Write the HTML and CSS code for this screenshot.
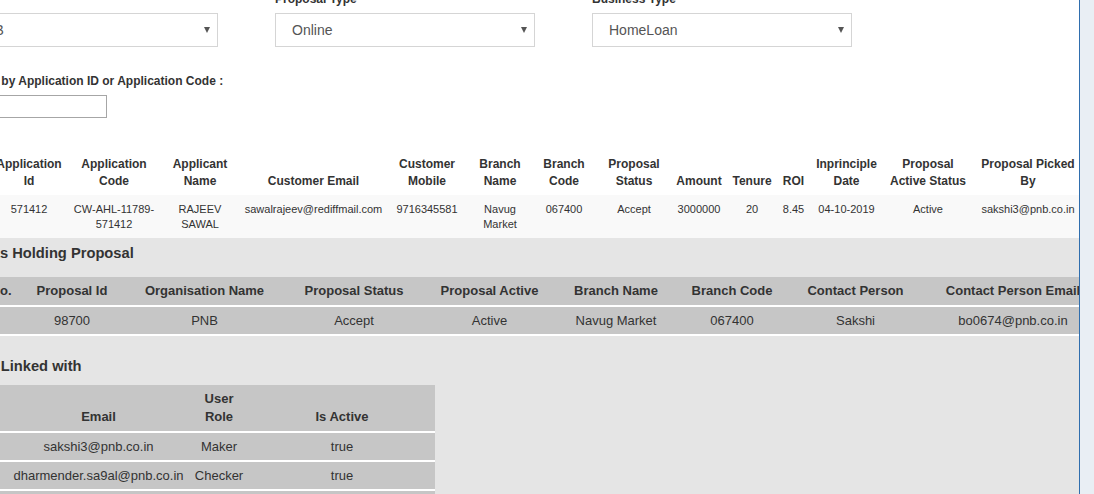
FILE: index.html
```html
<!DOCTYPE html>
<html lang="en">
<head>
<meta charset="utf-8">
<title>Proposal Details</title>
<link rel="stylesheet" href="styles.css">
</head>
<body>
<div class="viewport">
  <div class="page">
    <div class="filters">
      <div class="field">
        <div class="field-label">Bank</div>
        <div class="select"><span>PNB</span><span class="caret"></span></div>
      </div>
      <div class="field">
        <div class="field-label">Proposal Type</div>
        <div class="select"><span>Online</span><span class="caret"></span></div>
      </div>
      <div class="field">
        <div class="field-label">Business Type</div>
        <div class="select"><span>HomeLoan</span><span class="caret"></span></div>
      </div>
    </div>

    <div class="search-label">Search by Application ID or Application Code :</div>
    <input class="search-input" type="text">

    <table class="app-table">
      <colgroup>
        <col style="width:32px"><col style="width:78px"><col style="width:92px"><col style="width:80px">
        <col style="width:147px"><col style="width:80px"><col style="width:66px"><col style="width:62px">
        <col style="width:78px"><col style="width:52px"><col style="width:54px"><col style="width:29px">
        <col style="width:77px"><col style="width:86px"><col style="width:114px">
      </colgroup>
      <thead>
        <tr>
          <th>Sr. No.</th><th>Application Id</th><th>Application Code</th><th>Applicant Name</th>
          <th>Customer Email</th><th>Customer Mobile</th><th>Branch Name</th><th>Branch Code</th>
          <th>Proposal Status</th><th>Amount</th><th>Tenure</th><th>ROI</th>
          <th>Inprinciple Date</th><th>Proposal Active Status</th><th>Proposal Picked By</th>
        </tr>
      </thead>
      <tbody>
        <tr>
          <td>1</td><td>571412</td><td>CW-AHL-11789-571412</td><td>RAJEEV SAWAL</td>
          <td>sawalrajeev@rediffmail.com</td><td>9716345581</td><td>Navug Market</td><td>067400</td>
          <td>Accept</td><td>3000000</td><td>20</td><td>8.45</td>
          <td>04-10-2019</td><td>Active</td><td>sakshi3@pnb.co.in</td>
        </tr>
      </tbody>
    </table>

    <div class="section">
      <h3 class="section-title first">Banks Holding Proposal</h3>
      <table class="grey-table holding">
        <colgroup>
          <col style="width:66px"><col style="width:96px"><col style="width:169px"><col style="width:130px">
          <col style="width:141px"><col style="width:112px"><col style="width:120px"><col style="width:127px">
          <col style="width:188px">
        </colgroup>
        <thead>
          <tr>
            <th>Sr. No.</th><th>Proposal Id</th><th>Organisation Name</th><th>Proposal Status</th>
            <th>Proposal Active</th><th>Branch Name</th><th>Branch Code</th><th>Contact Person</th>
            <th>Contact Person Email</th>
          </tr>
        </thead>
        <tbody>
          <tr>
            <td>1</td><td>98700</td><td>PNB</td><td>Accept</td><td>Active</td>
            <td>Navug Market</td><td>067400</td><td>Sakshi</td><td>bo0674@pnb.co.in</td>
          </tr>
        </tbody>
      </table>

      <h3 class="section-title second">User Linked with</h3>
      <table class="grey-table users">
        <colgroup>
          <col style="width:50px"><col style="width:181px"><col style="width:60px"><col style="width:186px">
        </colgroup>
        <thead>
          <tr><th>S.No</th><th>Email</th><th>User Role</th><th>Is Active</th></tr>
        </thead>
        <tbody>
          <tr><td>1</td><td>sakshi3@pnb.co.in</td><td>Maker</td><td>true</td></tr>
          <tr><td>2</td><td>dharmender.sa9al@pnb.co.in</td><td>Checker</td><td>true</td></tr>
          <tr><td>3</td><td>&nbsp;</td><td>&nbsp;</td><td>&nbsp;</td></tr>
        </tbody>
      </table>
    </div>
  </div>
</div>
<div class="rail"></div>
</body>
</html>
```

FILE: styles.css
```css
html, body {
  margin: 0;
  padding: 0;
}

body {
  display: flex;
  width: 1094px;
  height: 494px;
  overflow: hidden;
  font-family: "Liberation Sans", Arial, sans-serif;
  color: #333;
  background: #fff;
}

.viewport {
  width: 1079px;
  flex: none;
  overflow: hidden;
  background: #fff;
}

.rail {
  flex: 1;
  border-left: 1px solid #2f6eae;
  background: #e9eef4;
}

.page {
  width: 1160px;
  margin: -9px 0 0 -42px;
}

/* Filters */
.filters {
  display: flex;
  gap: 57px;
}

.field {
  width: 260px;
}

.field-label {
  font-size: 12px;
  font-weight: bold;
  line-height: 17px;
  margin-bottom: 5px;
}

.select {
  box-sizing: border-box;
  height: 34px;
  border: 1px solid #d5d5d5;
  background: #fff;
  display: flex;
  align-items: center;
  justify-content: space-between;
  padding: 0 7px 0 16px;
  font-size: 14px;
  color: #555;
}

.caret {
  width: 0;
  height: 0;
  border-left: 3.5px solid transparent;
  border-right: 3.5px solid transparent;
  border-top: 6px solid #555;
}

/* Search */
.search-label {
  margin-top: 26px;
  font-size: 12px;
  font-weight: bold;
  line-height: 17px;
}

.search-input {
  display: block;
  box-sizing: border-box;
  margin: 5px 0 0;
  width: 149px;
  height: 23px;
  border: 1px solid #a6a6a6;
  padding: 0 4px;
  font-size: 12px;
}

/* Application table */
.app-table {
  margin-top: 33px;
  table-layout: fixed;
  border-collapse: collapse;
  width: 1127px;
}

.app-table th {
  font-size: 12px;
  font-weight: bold;
  line-height: 17px;
  padding: 5px 3px 5px;
  text-align: center;
  vertical-align: bottom;
}

.app-table td {
  font-size: 11px;
  line-height: 15px;
  padding: 7px 3px 6px;
  text-align: center;
  vertical-align: top;
  background: #f9f9f9;
}

/* Grey section */
.section {
  background: #e5e5e5;
  padding: 5px 0 40px;
}

.section-title {
  margin: 0;
  padding-left: 6px;
  font-size: 14.7px;
  line-height: 20px;
  font-weight: bold;
  color: #333;
}

.section-title.first {
  margin-bottom: 14px;
}

.section-title.second {
  margin-top: 20px;
  margin-bottom: 9px;
}

.grey-table {
  table-layout: fixed;
  border-collapse: collapse;
  background: #c6c6c6;
}

.grey-table.holding {
  width: 1149px;
}

.grey-table.users {
  width: 477px;
}

.grey-table th,
.grey-table td {
  font-size: 13px;
  line-height: 18px;
  text-align: center;
  border-bottom: 2px solid #fff;
  color: #333;
}

.grey-table th {
  font-weight: bold;
  padding: 5px 4px;
  vertical-align: bottom;
}

.grey-table td {
  padding: 5px 4px 4px;
  vertical-align: middle;
}
```
